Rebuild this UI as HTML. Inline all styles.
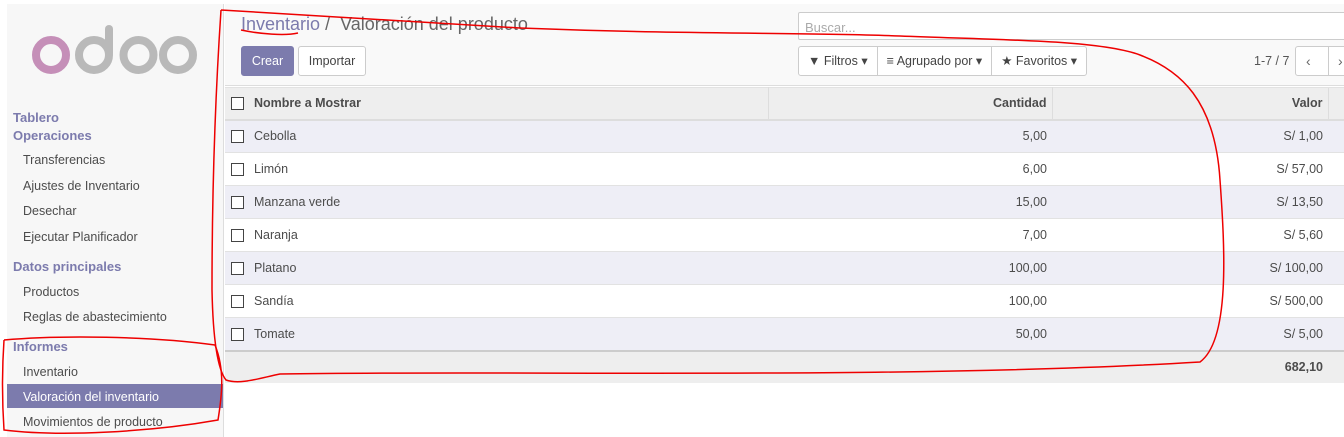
<!DOCTYPE html>
<html><head><meta charset="utf-8"><style>
*{box-sizing:border-box;margin:0;padding:0}
body{width:1344px;height:437px;overflow:hidden;background:#fff;font-family:"Liberation Sans",Arial,sans-serif;font-size:13px;color:#4c4c4c;position:relative}
.side{position:absolute;left:7px;top:4px;width:217px;height:433px;background:#f7f7f7;border-right:1px solid #ddd}
.side .h{position:absolute;left:6px;color:#7c7bad;font-weight:bold;font-size:13px}
.side .i{position:absolute;left:16px;font-size:12.5px;color:#4c4c4c}
.act{position:absolute;left:0;width:216px;height:24px;top:380px;background:#7c7bad}
.main{position:absolute;left:225px;top:4px;right:0;height:82px;background:#f9f9f9;border-bottom:1px solid #ddd}
.bc{position:absolute;left:16px;top:10px;font-size:18px;color:#666}
.bc a{color:#7c7bad}
.btn{position:absolute;top:42px;height:30px;border-radius:3px;font-size:12.5px;line-height:28px;text-align:center}
.search{position:absolute;left:573px;top:8px;width:560px;height:28px;border:1px solid #ccc;background:#fff;border-radius:2px;color:#aaa;padding:7px 6px;font-size:13px}
.grp{position:absolute;left:573px;top:42px;height:30px;border:1px solid #ccc;background:#fff;border-radius:3px;display:flex;font-size:12.5px;color:#444}
.grp div{padding:0 9px;line-height:28px;border-right:1px solid #ccc}
.grp div:last-child{border:none}
table{position:absolute;left:225px;top:87px;width:1119px;border-collapse:collapse;table-layout:fixed}
td,th{height:33px;padding:0 5px;font-size:12.5px;border-top:1px solid #e2e2e2}
th{background:#eee;font-weight:bold;text-align:left;height:32px;border-bottom:2px solid #ddd}
.cb{width:24px;padding-left:6px}
.cb span{display:inline-block;width:13px;height:13px;border:1px solid #444;background:#fff;vertical-align:middle}
.r{text-align:right}
tr.o td{background:#eeeef6}
tfoot td{background:#eee;border-top:2px solid #ccc;font-weight:bold;height:32px}
</style></head><body>
<div class="side">
<svg style="position:absolute;left:0;top:0" width="217" height="90" viewBox="0 0 217 90">
<circle cx="44" cy="51" r="15" fill="none" stroke="#c58fb8" stroke-width="8"/>
<circle cx="87" cy="51" r="15" fill="none" stroke="#b9b9b9" stroke-width="8"/>
<rect x="98" y="21" width="8" height="32" rx="4" fill="#b9b9b9"/>
<circle cx="131.5" cy="51" r="15" fill="none" stroke="#b9b9b9" stroke-width="8"/>
<circle cx="171" cy="51" r="15" fill="none" stroke="#b9b9b9" stroke-width="8"/>
</svg>
<div class="h" style="top:106px">Tablero</div>
<div class="h" style="top:124px">Operaciones</div>
<div class="i" style="top:149px">Transferencias</div>
<div class="i" style="top:175px">Ajustes de Inventario</div>
<div class="i" style="top:200px">Desechar</div>
<div class="i" style="top:226px">Ejecutar Planificador</div>
<div class="h" style="top:255px">Datos principales</div>
<div class="i" style="top:281px">Productos</div>
<div class="i" style="top:306px">Reglas de abastecimiento</div>
<div class="h" style="top:335px">Informes</div>
<div class="i" style="top:361px">Inventario</div>
<div class="act"></div>
<div class="i" style="top:386px;color:#fff">Valoración del inventario</div>
<div class="i" style="top:411px">Movimientos de producto</div>
</div>
<div class="main">
<div class="bc"><a>Inventario</a> /&nbsp; Valoración del producto</div>
<div class="btn" style="left:16px;width:53px;background:#7c7bad;color:#fff;border:1px solid #7c7bad">Crear</div>
<div class="btn" style="left:73px;width:68px;background:#fff;border:1px solid #ccc;color:#444">Importar</div>
<div class="search">Buscar...<span style="position:absolute;right:-4px;top:5px;color:#444;font-weight:bold">⊖</span></div>
<div class="grp"><div>▼ Filtros ▾</div><div>≡ Agrupado por ▾</div><div>★ Favoritos ▾</div></div>
<div style="position:absolute;left:1029px;top:50px;font-size:12.5px;color:#555">1-7 / 7</div>
<div style="position:absolute;left:1070px;top:42px;width:60px;height:30px;border:1px solid #ccc;background:#fff;border-radius:3px;font-size:14px;color:#666;line-height:28px"><span style="position:absolute;left:10px">‹</span><span style="position:absolute;left:32px;border-left:1px solid #ccc;padding-left:9px">›</span></div>
</div>
<table>
<colgroup><col style="width:24px"><col style="width:519px"><col style="width:284px"><col style="width:276px"><col></colgroup>
<thead><tr><th class="cb"><span></span></th><th style="border-right:1px solid #ddd">Nombre a Mostrar</th><th class="r" style="border-right:1px solid #ddd">Cantidad</th><th class="r">Valor</th><th style="border-left:1px solid #ddd"></th></tr></thead>
<tbody>
<tr class="o"><td class="cb"><span></span></td><td>Cebolla</td><td class="r">5,00</td><td class="r">S/ 1,00</td><td></td></tr>
<tr><td class="cb"><span></span></td><td>Limón</td><td class="r">6,00</td><td class="r">S/ 57,00</td><td></td></tr>
<tr class="o"><td class="cb"><span></span></td><td>Manzana verde</td><td class="r">15,00</td><td class="r">S/ 13,50</td><td></td></tr>
<tr><td class="cb"><span></span></td><td>Naranja</td><td class="r">7,00</td><td class="r">S/ 5,60</td><td></td></tr>
<tr class="o"><td class="cb"><span></span></td><td>Platano</td><td class="r">100,00</td><td class="r">S/ 100,00</td><td></td></tr>
<tr><td class="cb"><span></span></td><td>Sandía</td><td class="r">100,00</td><td class="r">S/ 500,00</td><td></td></tr>
<tr class="o"><td class="cb"><span></span></td><td>Tomate</td><td class="r">50,00</td><td class="r">S/ 5,00</td><td></td></tr>
</tbody>
<tfoot><tr><td></td><td></td><td></td><td class="r">682,10</td><td></td></tr></tfoot>
</table>
<svg style="position:absolute;left:0;top:0" width="1344" height="437" fill="none" stroke="#e00" stroke-width="1.5">
<path d="M221 10 C215 100 212 200 212 290 C213 340 218 370 226 380 C240 385 260 378 280 374 C500 370 900 380 1200 362 C1230 340 1225 250 1220 180 C1215 100 1180 70 1140 55 C1100 40 1000 40 900 36 C800 32 700 35 520 28 C400 20 300 15 221 10"/>
<path d="M241 30 C260 34 285 36 298 33"/>
<path d="M4 340 C60 335 150 336 215 345 C225 370 222 395 218 420 C150 432 60 437 4 430 C2 400 2 370 4 340"/>
</svg>
</body></html>
